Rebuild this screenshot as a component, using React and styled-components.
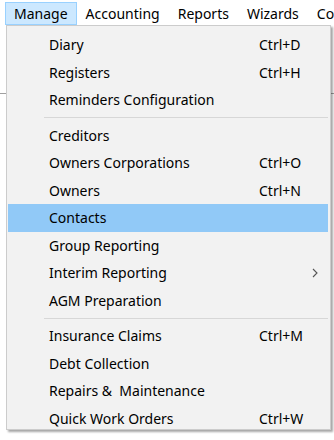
import React from "react";
import styled, { createGlobalStyle } from "styled-components";

const GlobalStyle = createGlobalStyle`
  html, body { margin: 0; padding: 0; background: #ffffff; }
  body { font-family: "Noto Sans", "Open Sans", sans-serif; color: #000; }
`;

const Window = styled.div`
  position: relative;
  width: 334px;
  height: 440px;
  overflow: hidden;
  background: #ffffff;
`;

const MenuBar = styled.div`
  display: flex;
  align-items: stretch;
  height: 23px;
  padding: 2px 0 0 5px;
`;

const MenuBarItem = styled.div`
  display: flex;
  align-items: center;
  padding: 0 8px;
  font-size: 14px;
  white-space: nowrap;
  border: 1px solid ${(p) => (p.$active ? "#99d1ff" : "transparent")};
  background: ${(p) => (p.$active ? "#cce8ff" : "transparent")};
`;

const Toolbar = styled.div`
  height: 68px;
  border-bottom: 1px solid #a0a0a0;
`;

const Dropdown = styled.div`
  position: absolute;
  left: 6px;
  top: 25px;
  width: 323px;
  padding: 5px 0 0;
  height: 398px;
  background: #f2f2f2;
  border: 1px solid #cccccc;
  box-shadow: 2px 2px 2px rgba(0, 0, 0, 0.35);
  display: flex;
  flex-direction: column;
`;

const Row = styled.div`
  display: grid;
  grid-template-columns: 210px 1fr 24px;
  align-items: center;
  height: 27.5px;
  flex: 0 0 27.5px;
  margin: 0 2px 0 1px;
  padding-left: 41px;
  font-size: 14px;
  white-space: nowrap;
  background: ${(p) => (p.$selected ? "#91c9f7" : "transparent")};
`;

const Shortcut = styled.span``;

const ArrowCell = styled.span`
  display: flex;
  align-items: center;
  padding-left: 8px;
`;

const Separator = styled.div`
  flex: 0 0 8px;
  display: flex;
  align-items: center;
  margin-left: 37px;
  margin-right: 2px;
  &::after {
    content: "";
    flex: 1;
    height: 1px;
    background: #d7d7d7;
  }
`;

const Chevron = () => (
  <svg width="6" height="10" viewBox="0 0 6 10">
    <path d="M1 1 L5 5 L1 9" fill="none" stroke="#555" strokeWidth="1.1" />
  </svg>
);

const sections = [
  [
    { label: "Diary", shortcut: "Ctrl+D" },
    { label: "Registers", shortcut: "Ctrl+H" },
    { label: "Reminders Configuration" },
  ],
  [
    { label: "Creditors" },
    { label: "Owners Corporations", shortcut: "Ctrl+O" },
    { label: "Owners", shortcut: "Ctrl+N" },
    { label: "Contacts", selected: true },
    { label: "Group Reporting" },
    { label: "Interim Reporting", submenu: true },
    { label: "AGM Preparation" },
  ],
  [
    { label: "Insurance Claims", shortcut: "Ctrl+M" },
    { label: "Debt Collection" },
    { label: "Repairs &\u00a0 Maintenance" },
    { label: "Quick Work Orders", shortcut: "Ctrl+W" },
  ],
];

export default function App() {
  return (
    <>
      <GlobalStyle />
      <Window>
        <MenuBar>
          <MenuBarItem $active>Manage</MenuBarItem>
          <MenuBarItem>Accounting</MenuBarItem>
          <MenuBarItem>Reports</MenuBarItem>
          <MenuBarItem>Wizards</MenuBarItem>
          <MenuBarItem>Communications</MenuBarItem>
        </MenuBar>
        <Toolbar />
        <Dropdown>
          {sections.map((items, si) => (
            <React.Fragment key={si}>
              {si > 0 && <Separator />}
              {items.map((it) => (
                <Row key={it.label} $selected={it.selected}>
                  <span>{it.label}</span>
                  <Shortcut>{it.shortcut || ""}</Shortcut>
                  <ArrowCell>{it.submenu && <Chevron />}</ArrowCell>
                </Row>
              ))}
            </React.Fragment>
          ))}
        </Dropdown>
      </Window>
    </>
  );
}
